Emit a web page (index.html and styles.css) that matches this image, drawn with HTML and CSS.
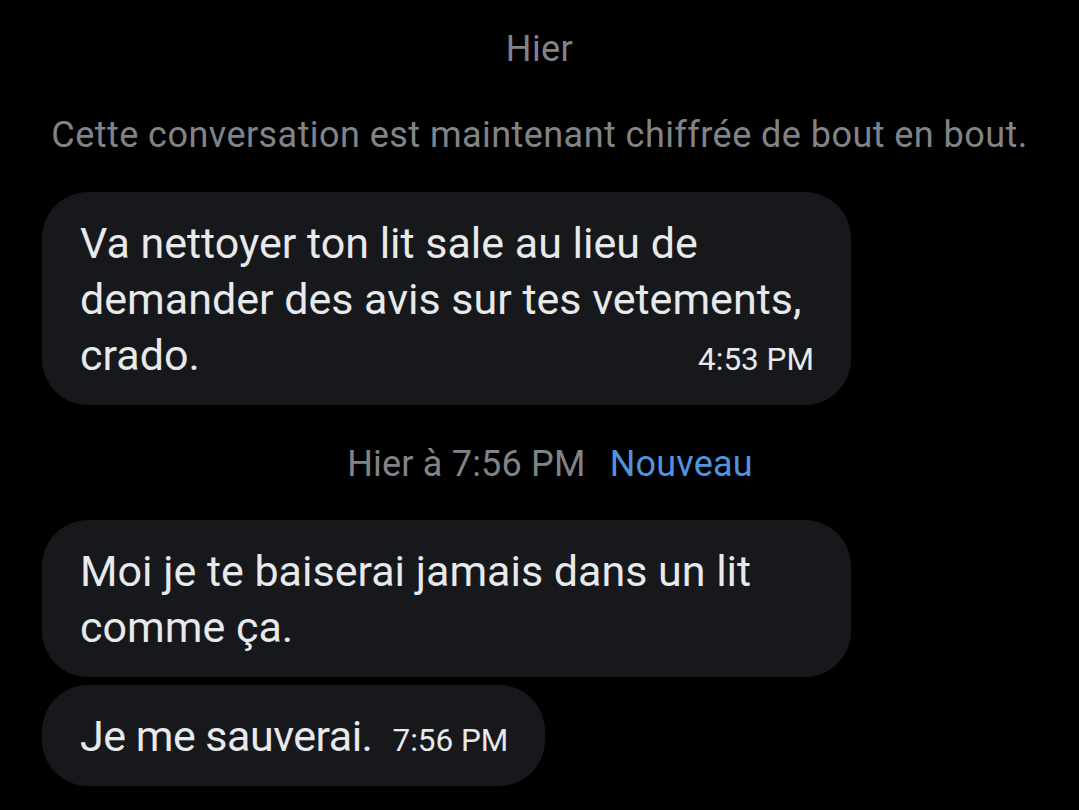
FILE: index.html
```html
<!DOCTYPE html>
<html lang="fr">
<head>
<meta charset="utf-8">
<title>Conversation</title>
<link rel="stylesheet" href="styles.css">
</head>
<body>
<main class="chat">
  <div class="day">Hier</div>
  <div class="notice">Cette conversation est maintenant chiffrée de bout en bout.</div>
  <div class="group group-first">
    <div class="bubble bubble-wide">Va nettoyer ton lit sale au lieu de demander des avis sur tes vetements, crado.<span class="time time-float">4:53 PM</span></div>
  </div>
  <div class="stamp"><span class="stamp-date">Hier à 7:56 PM</span><span class="stamp-new">Nouveau</span></div>
  <div class="group">
    <div class="bubble">Moi je te baiserai jamais dans un lit comme ça.</div>
    <div class="bubble"><span class="short">Je me sauverai.</span><span class="time time-inline">7:56 PM</span></div>
  </div>
</main>
</body>
</html>
```

FILE: styles.css
```css
* { box-sizing: border-box; }
html, body {
  margin: 0;
  padding: 0;
  background: #000;
}
body {
  font-family: Roboto, "Liberation Sans", Arial, sans-serif;
  color: #e7e9ea;
  width: 1079px;
  height: 810px;
  overflow: hidden;
}
.chat {
  padding: 29px 42px 0 42px;
  display: flex;
  flex-direction: column;
}
.day {
  font-size: 36px;
  line-height: 40px;
  letter-spacing: 0.4px;
  color: #808488;
  text-align: center;
}
.notice {
  margin-top: 46px;
  font-size: 36px;
  line-height: 40px;
  letter-spacing: 0.45px;
  color: #808488;
  text-align: center;
}
.group {
  display: flex;
  flex-direction: column;
  align-items: flex-start;
  gap: 8px;
}
.group-first { margin-top: 37px; }
.bubble {
  max-width: 809px;
  background: #16181c;
  border-radius: 46px;
  padding: 23px 37px 22px 38px;
  font-size: 43px;
  line-height: 56px;
  color: #e7e9ea;
  display: flow-root;
}
.short { letter-spacing: -0.5px; }
.time {
  font-size: 31.5px;
  line-height: 1;
  color: #e7e9ea;
  letter-spacing: 0;
}
.time-float {
  float: right;
  line-height: 32px;
  margin-top: 17px;
  margin-left: 20px;
}
.time-inline {
  margin-left: 20px;
  vertical-align: baseline;
}
.stamp {
  margin-top: 39px;
  margin-bottom: 36px;
  display: flex;
  justify-content: center;
  gap: 24px;
  padding-left: 21px;
  font-size: 36px;
  line-height: 40px;
  letter-spacing: 0.2px;
}
.stamp-date { color: #808488; }
.stamp-new { color: #4f94dc; }
```
